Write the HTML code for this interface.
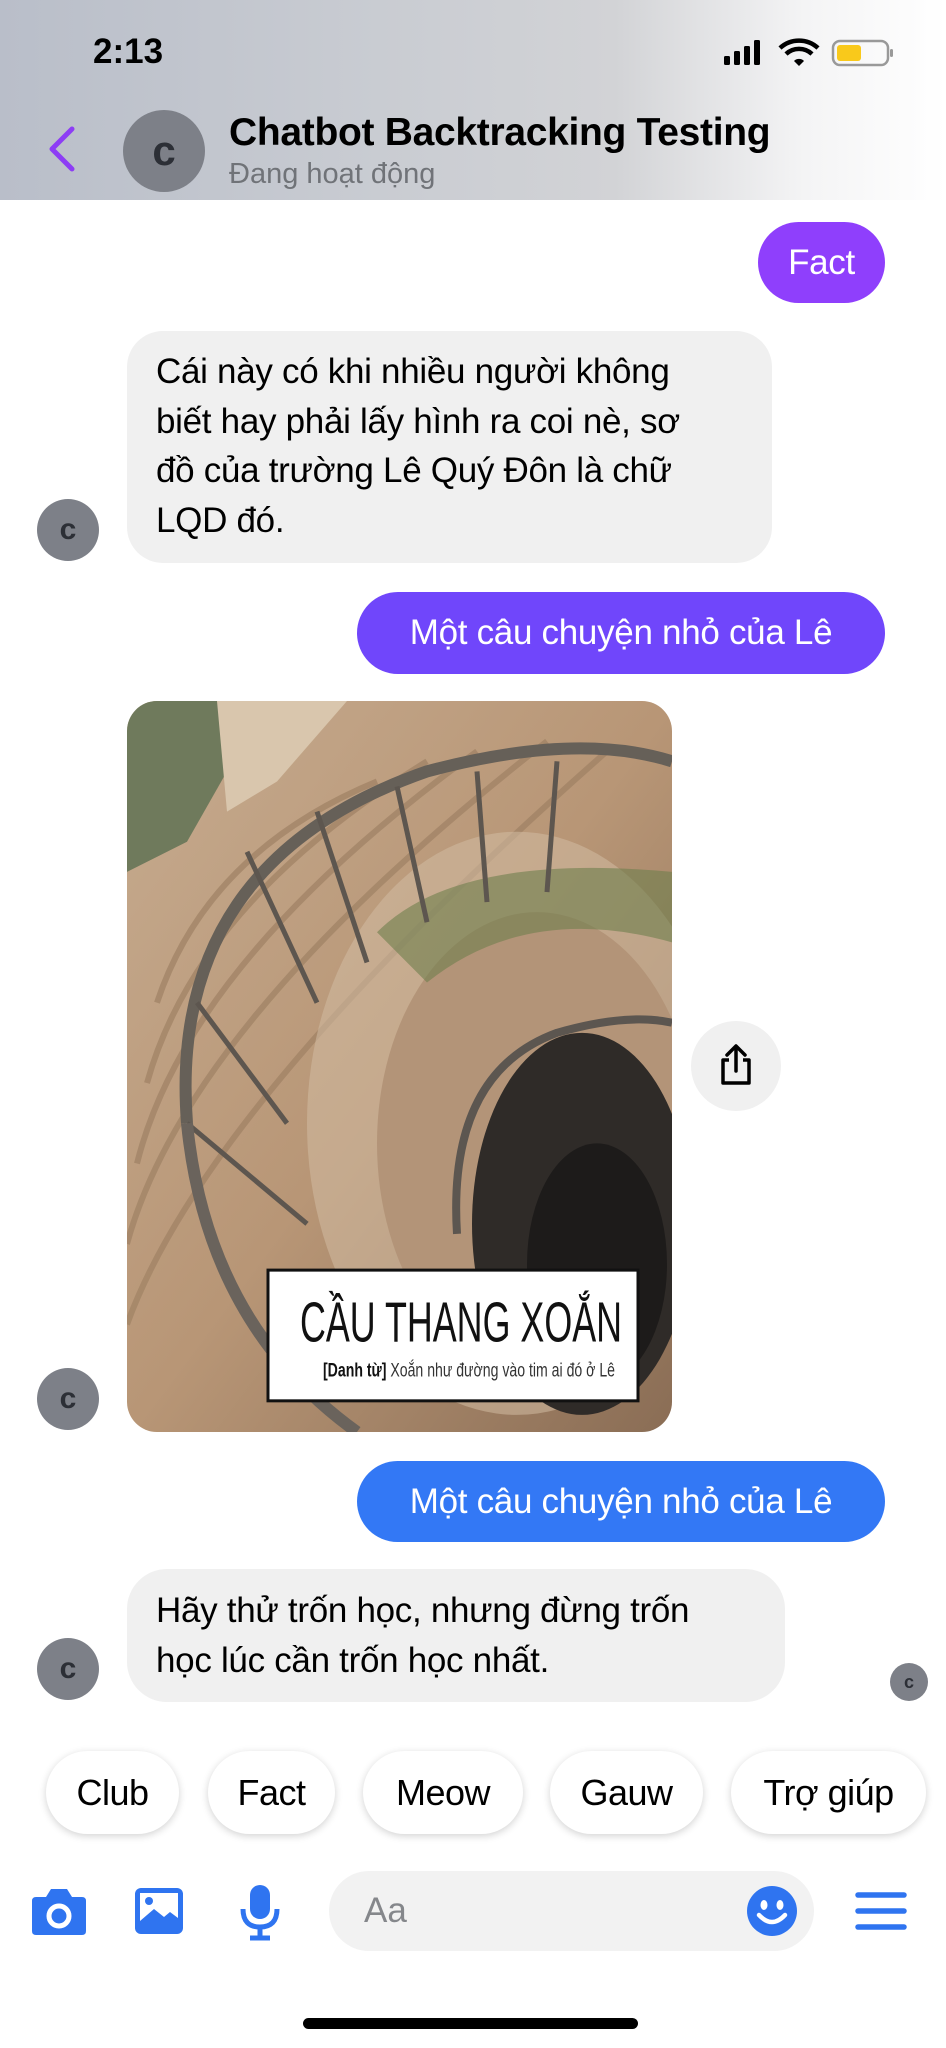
<!DOCTYPE html>
<html><head><meta charset="utf-8"><style>
*{margin:0;padding:0;box-sizing:border-box}
body{width:946px;height:2048px;background:#fff;position:relative;overflow:hidden;font-family:"Liberation Sans","DejaVu Sans",sans-serif;color:#000}
.a{position:absolute}
.av{position:absolute;border-radius:50%;background:#7d8088;color:#2c2f36;font-weight:bold;display:flex;align-items:center;justify-content:center}
.b{position:absolute;font-size:35px;line-height:49.5px;letter-spacing:-0.3px}
.pill{position:absolute;top:1751px;height:83px;border-radius:42px;background:#fff;box-shadow:0 2px 8px rgba(0,0,0,.18);font-size:36px;display:flex;align-items:center;justify-content:center;letter-spacing:-0.5px}
</style></head><body>
<div class="a" style="left:0;top:0;width:946px;height:200px;background:linear-gradient(90deg,#b9bec9 0%,#c9ccd2 40%,#d2d3d6 65%,#f4f4f5 85%,#fff 100%)"></div>
<div class="a" style="left:93px;top:32px;font-size:35px;font-weight:bold">2:13</div>
<svg class="a" style="left:722px;top:38px" width="175" height="30" viewBox="0 0 175 30">
<rect x="2" y="18" width="6" height="9" rx="1.5"/><rect x="12" y="13" width="6" height="14" rx="1.5"/><rect x="22" y="8" width="6" height="19" rx="1.5"/><rect x="32" y="2" width="6" height="25" rx="1.5"/>
<path d="M58 10 a28 28 0 0 1 38 0" stroke="#000" stroke-width="4.5" fill="none"/><path d="M64 16 a19 19 0 0 1 26 0" stroke="#000" stroke-width="4.5" fill="none"/><path d="M72 23 l5 5 l5-5 a7 7 0 0 0-10 0z"/>
<rect x="111" y="3" width="55" height="24" rx="7" fill="none" stroke="#999" stroke-width="2.5"/><rect x="115" y="7" width="24" height="16" rx="3" fill="#f9c91b"/><rect x="168" y="11" width="3" height="8" rx="1.5" fill="#999"/>
</svg>
<svg class="a" style="left:46px;top:125px" width="32" height="48" viewBox="0 0 32 48"><path d="M26 4 L6 24 L26 44" stroke="#8d3df5" stroke-width="5" fill="none" stroke-linecap="round" stroke-linejoin="round"/></svg>
<div class="av" style="left:123px;top:110px;width:82px;height:82px;font-size:42px">c</div>
<div class="a" style="left:229px;top:111px;font-size:39px;font-weight:bold;letter-spacing:-0.3px">Chatbot Backtracking Testing</div>
<div class="a" style="left:229px;top:158px;font-size:29px;color:#707378">Đang hoạt động</div>

<div class="b" style="left:758px;top:222px;width:127px;height:81px;border-radius:41px;background:#8f3ffc;color:#fff;display:flex;align-items:center;justify-content:center">Fact</div>

<div class="b" style="left:127px;top:331px;width:645px;height:232px;border-radius:36px;background:#f0f0f0;padding:16px 0 0 29px">Cái này có khi nhiều người không<br>biết hay phải lấy hình ra coi nè, sơ<br>đồ của trường Lê Quý Đôn là chữ<br>LQD đó.</div>
<div class="av" style="left:37px;top:499px;width:62px;height:62px;font-size:30px">c</div>

<div class="b" style="left:357px;top:592px;width:528px;height:82px;border-radius:41px;background:#7046fb;color:#fff;display:flex;align-items:center;justify-content:center">Một câu chuyện nhỏ của Lê</div>

<svg class="a" style="left:127px;top:701px" width="545" height="731" viewBox="0 0 545 727" preserveAspectRatio="none">
<defs><clipPath id="c"><rect width="545" height="727" rx="30"/></clipPath>
<linearGradient id="g" x1="0" y1="0" x2="1" y2="1"><stop offset="0" stop-color="#c6ab8f"/><stop offset=".5" stop-color="#b89676"/><stop offset="1" stop-color="#8a6d55"/></linearGradient></defs>
<g clip-path="url(#c)">
<rect width="545" height="727" fill="url(#g)"/>
<path d="M0 0 H140 L60 140 L0 170Z" fill="#6f7a5c"/>
<path d="M90 0 H220 L150 80 L100 110Z" fill="#d9c6ad"/>
<g stroke="#9f8164" stroke-width="6" fill="none" opacity=".7">
<path d="M30 300 Q80 150 250 80"/><path d="M20 380 Q70 200 300 60"/><path d="M10 460 Q60 260 350 50"/><path d="M0 540 Q60 320 420 40"/><path d="M0 620 Q80 400 480 50"/></g>
<ellipse cx="390" cy="420" rx="210" ry="290" fill="#d2bca3" opacity=".55"/>
<ellipse cx="410" cy="440" rx="160" ry="230" fill="#b39478"/>
<path d="M250 230 Q330 150 545 170 V240 Q400 200 300 280Z" fill="#6e7f4d" opacity=".6"/>
<ellipse cx="455" cy="520" rx="110" ry="190" fill="#2f2b28"/>
<ellipse cx="470" cy="560" rx="70" ry="120" fill="#1d1b1a"/>
<path d="M60 420 Q40 160 300 70 Q450 30 545 60" stroke="#666058" stroke-width="12" fill="none"/>
<path d="M330 530 Q320 370 430 330 Q500 310 545 320" stroke="#5c5650" stroke-width="8" fill="none"/>
<g stroke="#5d564f" stroke-width="5"><line x1="120" y1="150" x2="190" y2="300"/><line x1="190" y1="110" x2="240" y2="260"/><line x1="270" y1="85" x2="300" y2="220"/><line x1="350" y1="70" x2="360" y2="200"/><line x1="430" y1="60" x2="420" y2="190"/><line x1="70" y1="300" x2="160" y2="420"/><line x1="60" y1="420" x2="180" y2="520"/></g>
<path d="M60 420 Q80 620 230 727" stroke="#6a635c" stroke-width="12" fill="none"/>
<rect x="141" y="566" width="370" height="130" fill="#fff" stroke="#111" stroke-width="3"/>
<text x="173" y="637" font-family="Liberation Sans,sans-serif" font-size="56" fill="#111" textLength="322" lengthAdjust="spacingAndGlyphs">CẦU THANG XOẮN</text>
<text x="196" y="672" font-family="Liberation Sans,sans-serif" font-size="19" fill="#333" textLength="292" lengthAdjust="spacingAndGlyphs"><tspan font-weight="bold" fill="#111">[Danh từ]</tspan> Xoắn như đường vào tim ai đó ở Lê</text>
</g></svg>
<div class="av" style="left:37px;top:1368px;width:62px;height:62px;font-size:30px">c</div>
<div class="a" style="left:691px;top:1021px;width:90px;height:90px;border-radius:50%;background:#f0f0f0"></div>
<svg class="a" style="left:716px;top:1043px" width="40" height="44" viewBox="0 0 40 44"><path d="M20 28 V4 M11 12 L20 3 L29 12" stroke="#000" stroke-width="3.5" fill="none" stroke-linecap="round" stroke-linejoin="round"/><path d="M13 17 H7 V40 H33 V17 H27" stroke="#000" stroke-width="3.5" fill="none" stroke-linejoin="round"/></svg>

<div class="b" style="left:357px;top:1461px;width:528px;height:81px;border-radius:41px;background:#3378f5;color:#fff;display:flex;align-items:center;justify-content:center">Một câu chuyện nhỏ của Lê</div>

<div class="b" style="left:127px;top:1569px;width:658px;height:133px;border-radius:40px;background:#f0f0f0;padding:17px 0 0 29px">Hãy thử trốn học, nhưng đừng trốn<br>học lúc cần trốn học nhất.</div>
<div class="av" style="left:37px;top:1638px;width:62px;height:62px;font-size:30px">c</div>
<div class="av" style="left:890px;top:1663px;width:38px;height:38px;font-size:18px">c</div>

<div class="pill" style="left:46px;width:133px">Club</div>
<div class="pill" style="left:208px;width:127px">Fact</div>
<div class="pill" style="left:363px;width:160px">Meow</div>
<div class="pill" style="left:550px;width:153px">Gauw</div>
<div class="pill" style="left:731px;width:195px">Trợ giúp</div>

<svg class="a" style="left:30px;top:1885px" width="58" height="52" viewBox="0 0 58 52"><path d="M6 12 H16 L21 4 H37 L42 12 H52 Q56 12 56 16 V46 Q56 50 52 50 H6 Q2 50 2 46 V16 Q2 12 6 12Z" fill="#2f74f0"/><circle cx="29" cy="31" r="10" fill="none" stroke="#fff" stroke-width="5"/></svg>
<svg class="a" style="left:134px;top:1887px" width="50" height="48" viewBox="0 0 50 48"><rect x="1" y="1" width="48" height="46" rx="6" fill="#2f74f0"/><rect x="6" y="6" width="38" height="30" fill="#fff"/><circle cx="15" cy="14" r="4" fill="#2f74f0"/><path d="M6 34 L20 22 L30 30 L36 25 L44 31 V36 H6Z" fill="#2f74f0"/></svg>
<svg class="a" style="left:238px;top:1883px" width="44" height="58" viewBox="0 0 44 58"><rect x="12" y="2" width="20" height="34" rx="10" fill="#2f74f0"/><path d="M5 26 Q5 44 22 44 Q39 44 39 26" stroke="#2f74f0" stroke-width="5" fill="none"/><line x1="22" y1="44" x2="22" y2="54" stroke="#2f74f0" stroke-width="5"/><line x1="12" y1="55" x2="32" y2="55" stroke="#2f74f0" stroke-width="5"/></svg>
<div class="a" style="left:329px;top:1871px;width:485px;height:80px;border-radius:40px;background:#f2f2f2"></div>
<div class="a" style="left:364px;top:1891px;font-size:35px;color:#85878b">Aa</div>
<svg class="a" style="left:746px;top:1885px" width="52" height="52" viewBox="0 0 52 52"><circle cx="26" cy="26" r="25" fill="#2f74f0"/><ellipse cx="18" cy="20" rx="3.5" ry="5" fill="#fff"/><ellipse cx="34" cy="20" rx="3.5" ry="5" fill="#fff"/><path d="M13 30 Q26 44 39 30" stroke="#fff" stroke-width="4.5" fill="none" stroke-linecap="round"/></svg>
<svg class="a" style="left:855px;top:1891px" width="52" height="40" viewBox="0 0 52 40"><g stroke="#2f74f0" stroke-width="5.5" stroke-linecap="round"><line x1="3" y1="4" x2="49" y2="4"/><line x1="3" y1="20" x2="49" y2="20"/><line x1="3" y1="36" x2="49" y2="36"/></g></svg>
<div class="a" style="left:303px;top:2018px;width:335px;height:11px;border-radius:6px;background:#000"></div>
</body></html>
